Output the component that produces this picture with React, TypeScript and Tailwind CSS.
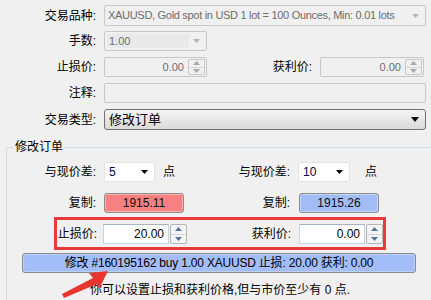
import React from 'react';

const font = "font-['Liberation_Sans','Noto_Sans_CJK_SC',sans-serif]";

// small triangle used for combo arrows / spinners
const Tri = ({ dir, color, w = 7, h = 4 }: { dir: 'up' | 'down'; color: string; w?: number; h?: number }) => (
  <svg width={w} height={h} viewBox={`0 0 ${w} ${h}`}>
    {dir === 'down' ? (
      <polygon points={`0,0 ${w},0 ${w / 2},${h}`} fill={color} />
    ) : (
      <polygon points={`0,${h} ${w},${h} ${w / 2},0`} fill={color} />
    )}
  </svg>
);

const Spin = ({ disabled }: { disabled?: boolean }) => (
  <div
    className={`flex flex-col w-[17px] h-full border rounded-[2px] ${
      disabled ? 'border-[#c9c9c9] bg-[#f0f0f0]' : 'border-[#b5b5b5] bg-[#f4f4f4]'
    }`}
  >
    <div className="flex-1 flex items-center justify-center border-b border-[#d6d6d6]">
      <Tri dir="up" color={disabled ? '#a8a8a8' : '#5a6fa0'} w={7} h={4} />
    </div>
    <div className="flex-1 flex items-center justify-center">
      <Tri dir="down" color={disabled ? '#a8a8a8' : '#5a6fa0'} w={7} h={4} />
    </div>
  </div>
);

const Label = ({ w, children }: { w: string; children: React.ReactNode }) => (
  <div className={`${w} flex justify-end whitespace-nowrap text-[12px] text-black leading-none shrink-0`}>
    {children}
  </div>
);

const App: React.FC = () => {
  return (
    <div className={`relative w-[431px] h-[300px] overflow-hidden bg-[#f0f0f0] ${font}`}>
      {/* top form */}
      <div className="pt-[5px]">
        <div className="flex items-center h-[21px]">
          <Label w="w-[96px]">交易品种:</Label>
          <div className="ml-[8px] w-[322px] h-full flex items-center border border-[#c8c8c8] rounded-[2px] bg-[#f0f0f0] pl-[3px] pr-[6px]">
            <span className="flex-1 text-[11px] tracking-[-0.3px] text-[#6d6d6d] whitespace-nowrap">
              XAUUSD, Gold spot in USD 1 lot = 100 Ounces, Min: 0.01 lots
            </span>
            <Tri dir="down" color="#b5b5b5" />
          </div>
        </div>

        <div className="flex items-center h-[20px] mt-[5px]">
          <Label w="w-[96px]">手数:</Label>
          <div className="ml-[8px] w-[103px] h-full flex items-center border border-[#c8c8c8] rounded-[2px] bg-[#f0f0f0] p-[2px]">
            <div className="w-[82px] h-full bg-[#e9e9e9] text-[11px] text-[#6d6d6d] flex items-center pl-[2px]">1.00</div>
            <div className="flex-1 flex justify-center">
              <Tri dir="down" color="#b5b5b5" />
            </div>
          </div>
        </div>

        <div className="flex items-center h-[20px] mt-[6px]">
          <Label w="w-[96px]">止损价:</Label>
          <div className="ml-[8px] w-[103px] h-full flex items-center border border-[#c8c8c8] rounded-[2px] bg-[#f0f0f0] p-[1px]">
            <span className="flex-1 text-right pr-[4px] text-[11px] text-[#6d6d6d]">0.00</span>
            <Spin disabled />
          </div>
          <Label w="w-[105px]">获利价:</Label>
          <div className="ml-[8px] w-[104px] h-full flex items-center border border-[#c8c8c8] rounded-[2px] bg-[#f0f0f0] p-[1px]">
            <span className="flex-1 text-right pr-[4px] text-[11px] text-[#6d6d6d]">0.00</span>
            <Spin disabled />
          </div>
        </div>

        <div className="flex items-center h-[20px] mt-[6px]">
          <Label w="w-[96px]">注释:</Label>
          <div className="ml-[8px] w-[322px] h-full border border-[#c8c8c8] rounded-[2px] bg-[#f0f0f0]" />
        </div>

        <div className="flex items-center h-[21px] mt-[6px]">
          <Label w="w-[96px]">交易类型:</Label>
          <div className="ml-[8px] w-[322px] h-full flex items-center border border-[#707070] rounded-[3px] bg-gradient-to-b from-[#f4f4f4] to-[#dadada] pl-[4px] pr-[6px]">
            <span className="flex-1 text-[13px] text-black">修改订单</span>
            <Tri dir="down" color="#000000" w={8} h={5} />
          </div>
        </div>
      </div>

      {/* group box */}
      <fieldset className="mt-[9px] ml-[6px] border-t border-l border-[#d5dadf] rounded-tl-[3px] pb-[20px]">
        <legend className="ml-[7px] px-[1px] text-[12px] leading-[16px] text-black">修改订单</legend>

        <div className="flex items-center h-[20px] mt-[7px]">
          <Label w="w-[89px]">与现价差:</Label>
          <div className="ml-[8px] w-[51px] h-full flex items-center bg-white border border-[#e3e3e3] rounded-[2px] pl-[4px] pr-[6px]">
            <span className="flex-1 text-[12px] text-[#000040]">5</span>
            <Tri dir="down" color="#000000" />
          </div>
          <span className="ml-[8px] text-[12px] text-black">点</span>
          <Label w="w-[115px]">与现价差:</Label>
          <div className="ml-[8px] w-[52px] h-full flex items-center bg-white border border-[#e3e3e3] rounded-[2px] pl-[4px] pr-[6px]">
            <span className="flex-1 text-[12px] text-[#000040]">10</span>
            <Tri dir="down" color="#000000" />
          </div>
          <span className="ml-[15px] text-[12px] text-black">点</span>
        </div>

        <div className="flex items-center h-[20px] mt-[11px]">
          <Label w="w-[89px]">复制:</Label>
          <div className="ml-[8px] w-[80px] h-full flex items-center justify-center border border-[#8c8c8c] rounded-[3px] bg-[#f88080] shadow-[inset_0_0_0_1px_#fbb0b0] text-[12px] text-[#101010]">
            1915.11
          </div>
          <Label w="w-[106px]">复制:</Label>
          <div className="ml-[9px] w-[80px] h-full flex items-center justify-center border border-[#8c8c8c] rounded-[3px] bg-[#a2bdf5] shadow-[inset_0_0_0_1px_#c6d6fa] text-[12px] text-[#101010]">
            1915.26
          </div>
        </div>

        {/* highlighted stop / take row */}
        <div className="ml-[47px] mt-[4px] w-[332px] h-[33px] border-[3px] border-[#ea3b3b] flex items-start pt-[4px]">
          <div className="flex items-center h-[20px]">
            <Label w="w-[40px]">止损价:</Label>
            <div className="ml-[6px] w-[66px] h-full flex items-center bg-white border border-[#c5d3e3] border-t-[#a6b3c6] pr-[4px]">
              <span className="flex-1 text-right text-[12px] text-black">20.00</span>
            </div>
            <div className="ml-[1px] h-full">
              <Spin />
            </div>
            <Label w="w-[104px]">获利价:</Label>
            <div className="ml-[8px] w-[66px] h-full flex items-center bg-white border border-[#c5d3e3] border-t-[#a6b3c6] pr-[4px]">
              <span className="flex-1 text-right text-[12px] text-black">0.00</span>
            </div>
            <div className="ml-[1px] h-full">
              <Spin />
            </div>
          </div>
        </div>

        <div className="ml-[15px] mt-[3px] w-[394px] h-[20px] flex items-center justify-center border border-[#8a8a8a] rounded-[3px] bg-[#a2bdf7] shadow-[inset_0_0_0_1px_#bcd0fa] text-[12px] tracking-[-0.2px] text-black whitespace-nowrap">
          修改 #160195162 buy 1.00 XAUUSD 止损: 20.00 获利: 0.00
        </div>

        <div className="ml-[83px] mt-[9px] text-[12px] text-black whitespace-nowrap leading-[16px]">
          你可以设置止损和获利价格,但与市价至少有 0 点.
        </div>
      </fieldset>

      {/* annotation arrow */}
      <svg className="absolute left-0 top-0 pointer-events-none" width={431} height={300}>
        <polygon points="108,271 89,273 93,278 62,294 64,298 97,284 99,289" fill="#e8362f" />
      </svg>
    </div>
  );
};

export default App;
